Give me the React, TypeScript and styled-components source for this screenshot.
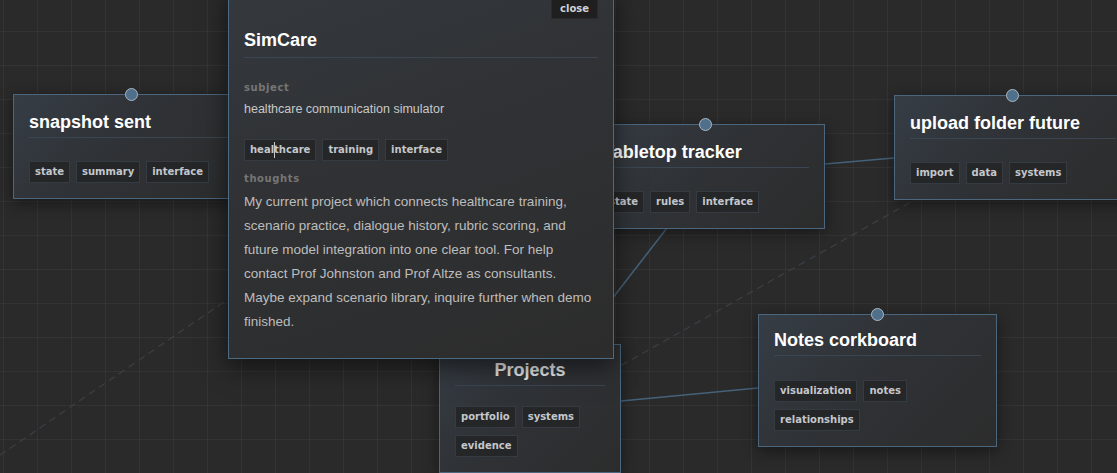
import React from "react";
import styled, { createGlobalStyle } from "styled-components";

const GlobalStyle = createGlobalStyle`
  html, body { margin: 0; padding: 0; background: #2a2a2a; overflow: hidden; }
  #root { width: 100vw; height: 473px; }
`;

const Canvas = styled.div`
  position: relative;
  width: 100%;
  height: 473px;
  overflow: hidden;
  background-color: #2a2a2a;
  background-image:
    linear-gradient(to right, rgba(255,255,255,0.045) 1px, transparent 1px),
    linear-gradient(to bottom, rgba(255,255,255,0.045) 1px, transparent 1px);
  background-size: 34px 34px;
  background-position: 3px 31px;
  font-family: "Liberation Sans", Arial, sans-serif;
`;

const Edges = styled.svg`
  position: absolute;
  inset: 0;
  width: 100%;
  height: 100%;
  pointer-events: none;
`;

const Node = styled.div<{ $x: number; $y: number; $w: number; $padTop?: number }>`
  position: absolute;
  left: ${(p) => p.$x}px;
  top: ${(p) => p.$y}px;
  width: ${(p) => p.$w}px;
  box-sizing: border-box;
  padding: ${(p) => p.$padTop ?? 16}px 15px 15px;
  border: 1px solid #4b677f;
  background: linear-gradient(135deg, #363d45 0%, #2f3236 45%, #2c2c2c 100%);
  box-shadow: 0 4px 14px rgba(0, 0, 0, 0.45);
`;

const Handle = styled.span`
  position: absolute;
  top: -7px;
  left: 50%;
  width: 13px;
  height: 13px;
  margin-left: -7px;
  border-radius: 50%;
  box-sizing: border-box;
  background: #4f6f8b;
  border: 1px solid #a9b8c4;
`;

const NodeTitle = styled.h3<{ $center?: boolean }>`
  margin: 0;
  padding-bottom: 4px;
  font-family: "Liberation Sans", Arial, sans-serif;
  font-weight: 700;
  font-size: 18px;
  line-height: 22px;
  color: ${(p) => (p.$center ? "#ececec" : "#ffffff")};
  text-align: ${(p) => (p.$center ? "center" : "left")};
  border-bottom: 1px solid #3a4652;
  white-space: nowrap;
`;

const TagList = styled.div<{ $top?: number }>`
  display: flex;
  flex-wrap: wrap;
  gap: 7px 6px;
  margin-top: ${(p) => p.$top ?? 23}px;
`;

const Tag = styled.span`
  display: inline-flex;
  align-items: center;
  height: 22px;
  box-sizing: border-box;
  padding: 0 5px;
  font-family: "DejaVu Sans", Verdana, sans-serif;
  font-weight: 700;
  font-size: 10px;
  line-height: 12px;
  color: #c4c7cb;
  background: #242628;
  border: 1px solid #343b42;
  white-space: nowrap;
`;

const Caret = styled.span`
  display: inline-block;
  width: 1px;
  height: 16px;
  margin: 0 -0.5px;
  background: #c8c8c8;
`;

const Panel = styled.div`
  position: absolute;
  left: 228px;
  top: -14px;
  width: 386px;
  box-sizing: border-box;
  padding: 12px 15px 24px;
  border: 1px solid #4b6a84;
  background: linear-gradient(160deg, #34393e 0%, #303235 40%, #2c2c2c 100%);
  box-shadow: 0 8px 24px rgba(0, 0, 0, 0.55);
  z-index: 5;
`;

const PanelHeader = styled.div`
  display: flex;
  justify-content: flex-end;
`;

const CloseButton = styled.button`
  height: 20px;
  padding: 0 8px;
  border: 1px solid #2a2a2a;
  background: #1f1f1f;
  color: #cfd2d6;
  font-family: "DejaVu Sans", Verdana, sans-serif;
  font-weight: 700;
  font-size: 10px;
  line-height: 18px;
  cursor: pointer;
`;

const PanelTitle = styled.h2`
  margin: 10px 0 0;
  padding-bottom: 6px;
  font-family: "Liberation Sans", Arial, sans-serif;
  font-weight: 700;
  font-size: 18px;
  line-height: 22px;
  color: #ffffff;
  border-bottom: 1px solid #3a4652;
`;

const FieldLabel = styled.div<{ $top: number }>`
  margin-top: ${(p) => p.$top}px;
  font-family: "DejaVu Sans", Verdana, sans-serif;
  font-weight: 700;
  font-size: 10px;
  line-height: 14px;
  letter-spacing: 0.6px;
  color: #767676;
`;

const SubjectText = styled.div`
  margin-top: 5px;
  font-size: 12.5px;
  line-height: 18px;
  color: #c8c8c8;
`;

const Thoughts = styled.p`
  margin: 4px 0 0;
  font-size: 13.5px;
  line-height: 24px;
  color: #bdbdbd;
`;

type NodeData = {
  title: string;
  x: number;
  y: number;
  w: number;
  tags: string[];
  center?: boolean;
  handle?: boolean;
  tagTop?: number;
  padTop?: number;
};

const nodes: NodeData[] = [
  { title: "snapshot sent", x: 13, y: 94, w: 238, tags: ["state", "summary", "interface"], handle: true },
  { title: "Tabletop tracker", x: 587, y: 124, w: 238, tags: ["state", "rules", "interface"], handle: true },
  { title: "upload folder future", x: 894, y: 95, w: 238, tags: ["import", "data", "systems"], handle: true },
  { title: "Notes corkboard", x: 758, y: 314, w: 239, tags: ["visualization", "notes", "relationships"], handle: true, tagTop: 24, padTop: 14 },
  { title: "Projects", x: 439, y: 344, w: 182, tags: ["portfolio", "systems", "evidence"], center: true, tagTop: 20, padTop: 14 },
];

export default function App() {
  return (
    <>
      <GlobalStyle />
      <Canvas>
        <Edges viewBox="0 0 1117 473">
          <line x1="-10" y1="462" x2="300" y2="250" stroke="#3a4046" strokeWidth="1.2" strokeDasharray="7 5" />
          <line x1="590" y1="383" x2="918" y2="198" stroke="#3a4046" strokeWidth="1.2" strokeDasharray="7 5" />
          <line x1="825" y1="164" x2="894" y2="158" stroke="#45627a" strokeWidth="1.5" />
          <line x1="621" y1="401" x2="758" y2="388" stroke="#45627a" strokeWidth="1.5" />
          <line x1="560" y1="366" x2="667" y2="228" stroke="#45627a" strokeWidth="1.5" />
          <line x1="612.5" y1="468" x2="612.5" y2="473" stroke="#8a7655" strokeWidth="1" />
        </Edges>
        {nodes.map((n) => (
          <Node key={n.title} $x={n.x} $y={n.y} $w={n.w} $padTop={n.padTop}>
            {n.handle && <Handle />}
            <NodeTitle $center={n.center}>{n.title}</NodeTitle>
            <TagList $top={n.tagTop}>
              {n.tags.map((t) => (
                <Tag key={t}>{t}</Tag>
              ))}
            </TagList>
          </Node>
        ))}
        <Panel>
          <PanelHeader>
            <CloseButton>close</CloseButton>
          </PanelHeader>
          <PanelTitle>SimCare</PanelTitle>
          <FieldLabel $top={23}>subject</FieldLabel>
          <SubjectText>healthcare communication simulator</SubjectText>
          <TagList $top={21}>
            <Tag>
              heal
              <Caret />
              thcare
            </Tag>
            <Tag>training</Tag>
            <Tag>interface</Tag>
          </TagList>
          <FieldLabel $top={11}>thoughts</FieldLabel>
          <Thoughts>
            My current project which connects healthcare training, scenario practice, dialogue history, rubric
            scoring, and future model integration into one clear tool. For help contact Prof Johnston and Prof
            Altze as consultants. Maybe expand scenario library, inquire further when demo finished.
          </Thoughts>
        </Panel>
      </Canvas>
    </>
  );
}
